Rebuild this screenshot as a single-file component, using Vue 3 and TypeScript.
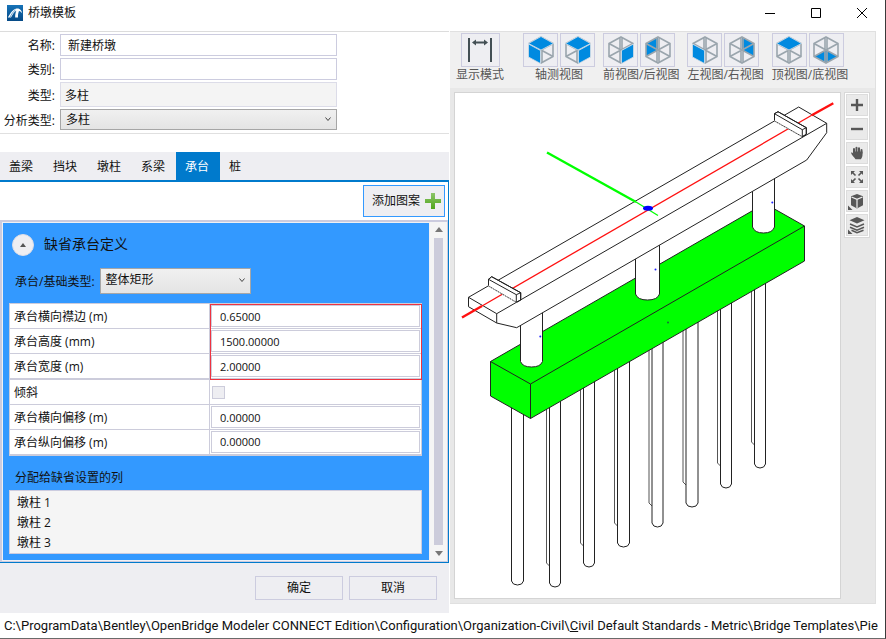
<script setup lang="ts">
import { ref } from 'vue'

type Face = 'top' | 'left' | 'right' | 'backLeft' | 'backRight' | 'bottom'

interface ViewButton {
  title: string
  faces: Face[]
}

interface ViewGroup {
  label: string
  views: ViewButton[]
}

interface Pile {
  x: number
  width: number
  top: number
  bottom: number
  backX?: number
  backBottom?: number
}

const facePoints: Record<Face, string> = {
  top: '13,0.5 25.5,7.5 13,14 0.5,7.5',
  left: '0.5,8 12.5,14.5 12.5,27.5 0.5,21',
  right: '25.5,8 13.5,14.5 13.5,27.5 25.5,21',
  backLeft: '1,7.5 13,1 13,14 1,20.5',
  backRight: '25,7.5 13,1 13,14 25,20.5',
  bottom: '13,14 25,20.5 13,27 1,20.5',
}

const isHidden = (face: Face): boolean => ['backLeft', 'backRight', 'bottom'].includes(face)

const viewGroups: ViewGroup[] = [
  {
    label: '轴测视图',
    views: [
      { title: '左轴测视图', faces: ['top', 'left'] },
      { title: '右轴测视图', faces: ['top', 'right'] },
    ],
  },
  {
    label: '前视图/后视图',
    views: [
      { title: '前视图', faces: ['right'] },
      { title: '后视图', faces: ['backLeft'] },
    ],
  },
  {
    label: '左视图/右视图',
    views: [
      { title: '左视图', faces: ['left'] },
      { title: '右视图', faces: ['backRight'] },
    ],
  },
  {
    label: '顶视图/底视图',
    views: [
      { title: '顶视图', faces: ['top'] },
      { title: '底视图', faces: ['bottom'] },
    ],
  },
]

const tabs = ['盖梁', '挡块', '墩柱', '系梁', '承台', '桩']
const activeTab = ref('承台')

const templateName = ref('新建桥墩')
const category = ref('')
const analysisType = ref('多柱')
const capType = ref('整体矩形')
const skewed = ref(false)

const sizeRows = ref([
  { id: 'cap-edge', label: '承台横向襟边 (m)', value: '0.65000' },
  { id: 'cap-height', label: '承台高度 (mm)', value: '1500.00000' },
  { id: 'cap-width', label: '承台宽度 (m)', value: '2.00000' },
])

const offsetRows = ref([
  { id: 'cap-offset-x', label: '承台横向偏移 (m)', value: '0.00000' },
  { id: 'cap-offset-y', label: '承台纵向偏移 (m)', value: '0.00000' },
])

const columns = ['墩柱 1', '墩柱 2', '墩柱 3']

const piles: Pile[] = [
  { x: 511.5, width: 12, top: 395, bottom: 581 },
  { x: 549.5, width: 11, top: 390, bottom: 583, backX: 546.5, backBottom: 563 },
  { x: 583.5, width: 11, top: 370, bottom: 563, backX: 580.5, backBottom: 543 },
  { x: 617.5, width: 12, top: 350, bottom: 543, backX: 614.5, backBottom: 523 },
  { x: 652, width: 11, top: 330, bottom: 523, backX: 649, backBottom: 503 },
  { x: 686, width: 12, top: 310, bottom: 503, backX: 683, backBottom: 482 },
  { x: 720.5, width: 11, top: 290, bottom: 484, backX: 717.5, backBottom: 463 },
  { x: 754.5, width: 11, top: 270, bottom: 464, backX: 751.5, backBottom: 442 },
]

const pilePath = (p: Pile): string =>
  `M${p.x} ${p.top}V${p.bottom}q1 4 ${p.width / 2} 4t${p.width / 2} -4V${p.top}`

const backPilePath = (p: Pile): string =>
  p.backX && p.backBottom ? `M${p.backX} ${p.top}V${p.backBottom}l3 3` : ''
</script>

<template>
  <div class="window">
    <header class="titlebar">
      <svg class="logo" viewBox="0 0 16 16" aria-hidden="true">
        <defs>
          <linearGradient id="logoFill" x1="0" y1="0" x2="0" y2="1">
            <stop offset="0" stop-color="#1673b8" />
            <stop offset="1" stop-color="#064a86" />
          </linearGradient>
        </defs>
        <rect width="16" height="16" fill="url(#logoFill)" />
        <path d="M.8 12.500C3.500 8.500 5.500 4.300 9.500 3.500c3.500-.5 5.200 2 5.700 5-.9-1.500-1.900-2.300-3.200-2.500-.8 2-1.100 4-1 6.500H8.200C8 10 8.500 8 9.300 5.800 7 6.500 5.500 10 4 12.500z" fill="#fff" />
        <path d="M2.800 12.500C4.500 9.500 6 6.500 8.500 5" fill="none" stroke="#1268ab" stroke-width=".6" />
      </svg>
      <h1>桥墩模板</h1>
      <div class="window-buttons">
        <button type="button" aria-label="最小化">
          <svg viewBox="0 0 12 12"><path d="M1 6.500h10" /></svg>
        </button>
        <button type="button" aria-label="最大化">
          <svg viewBox="0 0 12 12"><path d="M1.500 1.500h9v9h-9z" /></svg>
        </button>
        <button type="button" aria-label="关闭">
          <svg viewBox="0 0 12 12"><path d="M1 1l10 10M11 1L1 11" /></svg>
        </button>
      </div>
    </header>

    <main class="content">
      <section class="editor">
        <form class="general" @submit.prevent>
          <label for="name">名称:</label>
          <input id="name" v-model="templateName" type="text" class="box padded" />
          <label for="category">类别:</label>
          <input id="category" v-model="category" type="text" class="box padded" />
          <label for="kind">类型:</label>
          <input id="kind" type="text" class="box readonly" value="多柱" readonly />
          <label for="analysis">分析类型:</label>
          <span class="select">
            <select id="analysis" v-model="analysisType">
              <option>多柱</option>
            </select>
            <svg class="chevron" viewBox="0 0 6 6" aria-hidden="true"><path d="M.5 1.500L3 4.500l2.500-3" /></svg>
          </span>
        </form>

        <nav class="tabs">
          <button
            v-for="tab in tabs"
            :key="tab"
            type="button"
            :class="{ active: tab === activeTab }"
            @click="activeTab = tab"
          >{{ tab }}</button>
        </nav>

        <div class="tab-page">
          <div class="actions">
            <button type="button" class="add">
              添加图案
              <svg viewBox="0 0 16 16" aria-hidden="true">
                <defs>
                  <linearGradient id="plusFill" x1="0" y1="0" x2="0" y2="1">
                    <stop offset="0" stop-color="#8cc56a" />
                    <stop offset="1" stop-color="#4fa51c" />
                  </linearGradient>
                </defs>
                <path d="M6 0h4v6h6v4h-6v6H6v-6H0V6h6z" fill="url(#plusFill)" />
              </svg>
            </button>
          </div>

          <div class="scroller">
            <div class="definition">
              <div class="definition-head">
                <button type="button" class="collapse" aria-label="折叠">
                  <svg viewBox="0 0 6 4"><path d="M0 4L3 0l3 4z" /></svg>
                </button>
                <h2>缺省承台定义</h2>
              </div>
              <div class="cap-type">
                <label for="cap-type">承台/基础类型:</label>
                <span class="select tall">
                  <select id="cap-type" v-model="capType">
                    <option>整体矩形</option>
                  </select>
                  <svg class="chevron" viewBox="0 0 6 6" aria-hidden="true"><path d="M.5 1.500L3 4.500l2.500-3" /></svg>
                </span>
              </div>

              <table class="properties">
                <tbody class="highlighted">
                  <tr v-for="row in sizeRows" :key="row.id">
                    <th scope="row"><label :for="row.id">{{ row.label }}</label></th>
                    <td><input :id="row.id" v-model="row.value" type="text" /></td>
                  </tr>
                </tbody>
                <tbody>
                  <tr>
                    <th scope="row"><label for="skewed">倾斜</label></th>
                    <td><input id="skewed" v-model="skewed" type="checkbox" /></td>
                  </tr>
                  <tr v-for="row in offsetRows" :key="row.id">
                    <th scope="row"><label :for="row.id">{{ row.label }}</label></th>
                    <td><input :id="row.id" v-model="row.value" type="text" /></td>
                  </tr>
                </tbody>
              </table>

              <h3>分配给缺省设置的列</h3>
              <ul class="columns">
                <li v-for="column in columns" :key="column">{{ column }}</li>
              </ul>
            </div>

            <div class="scrollbar" aria-hidden="true">
              <svg viewBox="0 0 8 5"><path d="M0 5l4-5 4 5z" /></svg>
              <div class="thumb"></div>
              <svg viewBox="0 0 8 5"><path d="M0 0l4 5 4-5z" /></svg>
            </div>
          </div>
        </div>

        <footer class="dialog-buttons">
          <button type="button">确定</button>
          <button type="button">取消</button>
        </footer>
      </section>

      <section class="viewer">
        <div class="toolbar">
          <div class="tool-group display">
            <div class="tool-row">
              <button type="button" class="tool wide" aria-label="显示模式">
                <svg viewBox="0 0 26 26" class="span-icon">
                  <path d="M2 1v24M24 1v24" stroke-width="2" />
                  <path d="M7 5.500h12" stroke-width="2" />
                  <path d="M5 5.500l4-3v6zM21 5.500l-4-3v6z" fill="#434f54" stroke="none" />
                </svg>
              </button>
            </div>
            <span>显示模式</span>
          </div>
          <div v-for="group in viewGroups" :key="group.label" class="tool-group">
            <div class="tool-row">
              <button v-for="view in group.views" :key="view.title" type="button" class="tool" :aria-label="view.title">
                <svg viewBox="0 0 26 28" class="cube">
                  <template v-for="face in view.faces" :key="face">
                    <polygon v-if="isHidden(face)" :points="facePoints[face]" class="face" />
                  </template>
                  <path class="wire" d="M13 1l12 6.500v13L13 27 1 20.500v-13zM12 1.500v25M14 1.500v25M1 7.500L13 14l12-6.500M1 20.500L13 14l12 6.500" />
                  <template v-for="face in view.faces" :key="face">
                    <polygon v-if="!isHidden(face)" :points="facePoints[face]" class="face front" />
                  </template>
                </svg>
              </button>
            </div>
            <span>{{ group.label }}</span>
          </div>
        </div>

        <div class="stage">
          <div class="canvas">
            <svg viewBox="455 93 385 505" role="img" aria-label="桥墩">
              <g class="edge">
                <template v-for="pile in piles" :key="pile.x">
                  <path :d="backPilePath(pile)" class="thin" />
                  <path :d="pilePath(pile)" />
                </template>
                <path class="cap" d="M490.500 361.500L765 203.500L774.500 209L804.500 226V261L530.500 418.500L490.500 396z" />
                <path class="open" d="M490.500 361.500L530.500 384L804.500 226M530.500 384V418.500" />
                <path d="M520.500 310V361.500q2 5.500 11 5.500t11 -5.500V305" />
                <path d="M635.500 250V294q2 6 12 6t12 -6V240" />
                <path d="M752.500 180V227q2 6 11 6t11 -6V170" />
                <path d="M468.500 297.300L798.700 107L826.700 123.300V132.700L806.700 160L516.700 327.700L496.700 323L468.500 306.700z" />
                <path class="open" d="M468.500 297.300L496.700 313.700L826.700 123.300M496.700 313.700V323" />
              </g>
              <g class="axis">
                <path class="green heavy" d="M547 152.500L636 202" />
                <path class="green" d="M636 202L658 215.500" />
                <path class="red heavy" d="M462 317.500L482 306" />
                <path class="red" d="M482 306L811.700 115.300" />
                <path class="red heavy" d="M811.700 115.300L833.300 103.300" />
                <ellipse cx="648" cy="208.300" rx="5" ry="2.500" fill="#00f" />
              </g>
              <g class="edge">
                <path d="M488.500 279.300L491.700 276.700L520.700 292.700V300L516.300 302.300L488.500 286z" stroke="none" />
                <path class="open" d="M488.500 286V279.300L491.700 276.700L520.700 292.700V300L516.300 302.300V294.700L488.500 279.300M516.300 294.700L520.700 292.700" />
                <path class="open dotted" d="M488.500 286L516.300 302.300" />
                <path d="M774.500 113.700L778 111.700L806.300 127.700V134.300L802.300 136.700L774.500 121z" stroke="none" />
                <path class="open" d="M774.500 121V113.700L778 111.700L806.300 127.700V134.300L802.300 136.700V129.700L774.500 113.700M802.300 129.700L806.300 127.700" />
                <path class="open dotted" d="M774.500 121L802.300 136.700" />
              </g>
              <g fill="#22f">
                <circle cx="540.300" cy="336.500" r="1" />
                <circle cx="655.500" cy="269.500" r="1" />
                <circle cx="772.300" cy="202.500" r="1" />
                <circle cx="668" cy="322.500" r="1" fill="#186b3a" />
              </g>
            </svg>
          </div>

          <div class="side-tools">
            <button type="button" aria-label="放大">
              <svg viewBox="0 0 20 20"><path d="M10 4v12M4 10h12" stroke-width="2.400" /></svg>
            </button>
            <button type="button" aria-label="缩小">
              <svg viewBox="0 0 20 20"><path d="M4 10h12" stroke-width="2.400" /></svg>
            </button>
            <button type="button" aria-label="平移">
              <svg viewBox="0 0 20 20">
                <path d="M7 10V6M9.500 9V4.800M12 9V5.200M14.500 10V7" stroke-width="2" stroke-linecap="round" />
                <path d="M6 8.500h9.500V12c0 2-1 3-1.500 4.300H8.500C7.500 14.500 4.500 12 4 9.800c.8-.9 1.700-.2 2.400 1z" fill="#575757" />
              </svg>
            </button>
            <button type="button" aria-label="适合视图">
              <svg viewBox="0 0 20 20">
                <path d="M5.500 5.500l3 3M14.500 5.500l-3 3M5.500 14.500l3-3M14.500 14.500l-3-3" stroke-width="1.600" />
                <path d="M4 4h4L4 8zM16 4v4l-4-4zM4 16v-4l4 4zM16 16h-4l4-4z" fill="#575757" />
              </svg>
            </button>
            <button type="button" aria-label="视图旋转">
              <svg viewBox="0 0 20 20">
                <path d="M10 3l6 2.300v9L10 17.500 4 14.300v-9z" fill="#575757" />
                <path d="M4.500 6L10 8.300 15.500 6M10 8.300V17" stroke="#efefef" stroke-width="1.200" />
                <path d="M1 14.500V19h4.500z" fill="#575757" />
              </svg>
            </button>
            <button type="button" aria-label="图层">
              <svg viewBox="0 0 20 20">
                <path d="M10 2l7.500 3.200L10 8.400 2.500 5.200z" fill="#575757" />
                <path d="M3 9l7 3 7-3M3 12.300l7 3 7-3M4.500 15.300l5.500 2.500 6.500-2.500" stroke-width="1.500" />
                <path d="M1 14.500V19h4.500z" fill="#575757" />
              </svg>
            </button>
          </div>
        </div>
      </section>
    </main>

    <div class="status">C:\ProgramData\Bentley\OpenBridge Modeler CONNECT Edition\Configuration\Organization-Civil\<u>C</u>ivil Default Standards - Metric\Bridge Templates\Pie</div>
  </div>
</template>

<style>
html,
body,
#app {
  height: 100%;
}
</style>

<style scoped>
.window,
.window * {
  box-sizing: border-box;
}

.window {
  display: flex;
  flex-direction: column;
  min-height: 100%;
  border-right: 1px solid #3a3a3a;
  border-bottom: 1px solid #6a6a6a;
  background: #fff;
  color: #111;
  font-family: "Open Sans", "Noto Sans CJK SC", sans-serif;
  font-size: 12px;
  line-height: 16px;
}

button,
input,
select {
  margin: 0;
  border-radius: 0;
  font: inherit;
  color: inherit;
}

h1,
h2,
h3 {
  margin: 0;
  font-weight: 400;
}

.titlebar {
  display: flex;
  align-items: center;
  height: 31px;
  padding: 0 11px 6px 7px;
  gap: 5px;
}

.logo {
  width: 16px;
  height: 16px;
}

.titlebar h1 {
  flex: 1;
  font-size: 12px;
}

.window-buttons {
  display: flex;
  gap: 22px;
}

.window-buttons button {
  display: flex;
  align-items: center;
  justify-content: center;
  width: 24px;
  height: 24px;
  padding: 0;
  border: 0;
  background: none;
}

.window-buttons svg {
  width: 12px;
  height: 12px;
  fill: none;
  stroke: #000;
}

.content {
  flex: 1;
  display: flex;
  align-items: flex-start;
}

.editor {
  flex: 0 1 449px;
  border-top: 1px solid #dcdcdc;
}

.general {
  display: grid;
  grid-template-columns: 55px 277px;
  column-gap: 5px;
  row-gap: 2px;
  align-items: center;
  padding: 2px 0 3px;
  border-bottom: 1px solid #e0e0e0;
}

.general label {
  padding-top: 2px;
  text-align: right;
  white-space: nowrap;
}

.box {
  width: 100%;
  height: 22px;
  padding: 0 4px;
  border: 1px solid #ccccdf;
  background: #fff;
}

.box.padded {
  padding: 0 7px;
}

.box.readonly {
  height: 25px;
  border-color: #dcdce8;
  background: #f4f4f4;
}

.select {
  position: relative;
  display: block;
}

.select select {
  appearance: none;
  display: block;
  width: 100%;
  height: 21px;
  padding: 0 5px;
  border: 1px solid #a6a6a6;
  background: linear-gradient(#f0f0f0, #e4e4e4);
}

.chevron {
  position: absolute;
  right: 6px;
  top: 50%;
  width: 6px;
  height: 6px;
  margin-top: -4px;
  fill: none;
  stroke: #444;
  pointer-events: none;
}

.tabs {
  display: flex;
  height: 30px;
  margin-top: 18px;
  border-bottom: 2px solid #007acc;
  background: #eeeef2;
}

.tabs button {
  width: 44px;
  padding: 2px 0 0 9px;
  border: 0;
  background: none;
  text-align: left;
}

.tabs button.active {
  background: #007acc;
  color: #fff;
}

.tab-page {
  border-right: 1px solid #007acc;
  border-bottom: 1px solid #007acc;
}

.actions {
  display: flex;
  justify-content: flex-end;
  padding: 3px 3px;
}

.add {
  display: flex;
  align-items: center;
  justify-content: flex-end;
  gap: 5px;
  width: 82px;
  height: 32px;
  padding: 0 3px;
  border: 1px solid #3399ff;
  background: #eeeef2;
  white-space: nowrap;
}

.add svg {
  width: 16px;
  height: 16px;
}

.scroller {
  display: flex;
  border: 1px solid #ccccdf;
  border-top-width: 2px;
  border-left-width: 2px;
}

.definition {
  flex: 1;
  min-width: 0;
  padding: 7px 7px 6px 6px;
  border: 1px solid #f0f0f4;
  background: #3399ff;
}

.definition-head {
  display: flex;
  align-items: center;
  gap: 10px;
  padding: 4px 3px;
}

.definition-head h2 {
  padding-bottom: 3px;
  font-size: 14px;
}

.collapse {
  display: flex;
  align-items: center;
  justify-content: center;
  width: 22px;
  height: 22px;
  padding: 0;
  border: 1px solid #dddde6;
  border-radius: 50%;
  background: #eeeef2;
}

.collapse svg {
  width: 6px;
  height: 4px;
  fill: #555;
}

.cap-type {
  display: flex;
  align-items: center;
  gap: 5px;
  padding: 8px 0 9px 6px;
}

.cap-type label {
  padding-top: 2px;
}

.select.tall {
  width: 151px;
}

.select.tall select {
  height: 26px;
  padding-bottom: 2px;
}

.properties {
  width: 100%;
  border-collapse: collapse;
  table-layout: fixed;
  border: 1px solid #ccccdb;
  border-bottom-width: 2px;
  background: #fff;
}

.properties th,
.properties td {
  height: 25px;
  padding: 0;
  border: 1px solid #ccccdb;
  font-weight: 400;
  text-align: left;
}

.properties th {
  width: 200px;
  padding: 2px 0 0 4px;
}

.properties td {
  padding: 0 1px;
}

.properties input[type='text'] {
  display: block;
  width: 100%;
  height: 22px;
  padding: 0 8px;
  border: 1px solid #ccccdb;
  background: #fff;
  font-size: 11px;
}

.properties input[type='checkbox'] {
  appearance: none;
  display: block;
  width: 13px;
  height: 13px;
  margin-left: 1px;
  border: 1px solid #ccccdb;
  background: #eeeef2;
}

.highlighted {
  position: relative;
}

.highlighted::after {
  content: '';
  position: absolute;
  left: 200px;
  right: 0;
  top: 0;
  bottom: 0;
  border: 1px solid #ee3340;
  pointer-events: none;
}

.definition h3 {
  padding: 14px 6px 4px;
  font-size: 12px;
}

.columns {
  margin: 0;
  padding: 2px 7px 0;
  border: 1px solid #ccccdf;
  background: #f5f5f5;
  list-style: none;
  line-height: 20px;
}

.scrollbar {
  display: flex;
  flex-direction: column;
  align-items: center;
  gap: 6px;
  width: 17px;
  padding: 5px 0;
  background: #f5f5f5;
}

.scrollbar svg {
  width: 8px;
  height: 5px;
  fill: #777;
}

.thumb {
  flex: 1;
  width: 9px;
  background: #ccccdb;
}

.dialog-buttons {
  display: flex;
  justify-content: flex-end;
  gap: 6px;
  padding: 13px 12px;
  background: #eeeef2;
}

.dialog-buttons button {
  width: 88px;
  height: 24px;
  padding: 0;
  border: 1px solid #ccccdf;
  background: #eeeef2;
}

.viewer {
  flex: 1;
  min-width: 0;
  margin: 0 9px 0 1px;
  border: 1px solid #e0e0e0;
  border-left: 0;
  background: #e8e8e8;
}

.toolbar {
  display: flex;
  gap: 8px;
  padding: 1px 6px 5px;
  background: #f0f0f0;
  color: #555;
}

.tool-group {
  display: flex;
  flex-direction: column;
  min-width: 72px;
  text-align: center;
  white-space: nowrap;
}

.tool-group.display {
  align-items: center;
  min-width: 48px;
  margin-right: 11px;
}

.tool-row {
  display: flex;
  gap: 2px;
}

.tool {
  display: flex;
  align-items: center;
  justify-content: center;
  width: 35px;
  height: 34px;
  padding: 0;
  border: 1px solid #ccccdf;
  background: #eeeef2;
}

.tool.wide {
  width: 39px;
}

.span-icon {
  width: 26px;
  height: 26px;
  fill: none;
  stroke: #434f54;
}

.cube {
  width: 26px;
  height: 28px;
}

.face {
  fill: #008ae0;
}

.face.front {
  stroke: #eeeef2;
  stroke-width: 0.7;
}

.wire {
  fill: none;
  stroke: #9aa5ad;
  stroke-width: 1.6;
}

.stage {
  display: flex;
  align-items: flex-start;
  justify-content: space-between;
  gap: 3px;
  padding: 4px 5px 4px 4px;
}

.canvas {
  flex: 1;
  min-width: 0;
  border: 1px solid #d4d4d4;
  background: #fff;
}

.canvas svg {
  display: block;
  width: 100%;
}

.edge path {
  fill: #fff;
  stroke: #222;
}

.edge .thin {
  stroke: #555;
}

.edge .cap {
  fill: #00ff00;
}

.edge .open {
  fill: none;
}

.edge .dotted {
  stroke: #fff;
  stroke-dasharray: 1 1;
}

.axis path {
  fill: none;
  stroke-width: 1.3;
}

.axis .green {
  stroke: #00ff00;
}

.axis .red {
  stroke: #ff1010;
}

.axis .heavy {
  stroke-width: 2.4;
}

.side-tools {
  display: flex;
  flex-direction: column;
  gap: 2px;
  padding: 1px;
  border: 1px solid #d8d8d8;
  background: #fff;
}

.side-tools button {
  width: 22px;
  height: 22px;
  padding: 0;
  border: 1px solid #dcdcdc;
  background: #eaeaea;
}

.side-tools svg {
  display: block;
  width: 20px;
  height: 20px;
  fill: none;
  stroke: #575757;
  stroke-width: 0;
}

.status {
  padding: 4px 0 4px 4px;
  overflow: hidden;
  font-family: Roboto, "Noto Sans CJK SC", sans-serif;
  font-size: 13px;
  line-height: 17px;
  white-space: nowrap;
}
</style>
